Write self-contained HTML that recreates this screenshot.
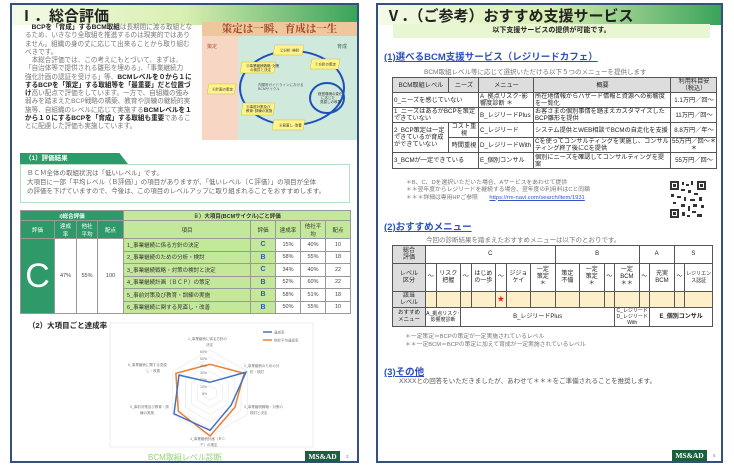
<!DOCTYPE html>
<html><head><meta charset="utf-8"><style>
*{margin:0;padding:0;box-sizing:border-box}
body{width:734px;height:466px;background:#fff;position:relative;overflow:hidden;font-family:"Liberation Sans","Noto Sans CJK JP",sans-serif;color:#444}
.a{position:absolute;white-space:nowrap}
.frame{position:absolute;border:2px solid #34507e;background:#fff}
.hdr{position:absolute;height:20px;background:linear-gradient(90deg,#f4fae8 0%,#d9efb0 50%,#3aa35a 100%)}
.ttl{font-weight:bold;color:#222;font-size:15px}
.p{font-size:6.6px;line-height:8.25px;color:#777}
.p b{color:#222}
table{border-collapse:collapse;table-layout:fixed;position:absolute}
td{border:1px solid #999;font-size:5.5px;text-align:center;overflow:hidden;white-space:nowrap;padding:0}
.g{background:#2e9a6a;color:#fff}
.lg{background:#c4e89a;color:#333}
.bl{color:#3456c0}
.t2 td{border-color:#555;font-size:6.2px;text-align:left;padding-left:1px;line-height:7px;white-space:normal;color:#222}
.t3 td{border-color:#555;font-size:6px;line-height:7px;white-space:normal;color:#222}
.h{color:#2d4fc0;font-weight:bold;font-size:9.5px;text-decoration:underline}
.logo{position:absolute;background:#1e5e3e;color:#fff;font-family:"Liberation Serif",serif;font-weight:bold;font-size:7.5px;text-align:center;line-height:11px;height:11px;width:35px}
</style></head><body>

<div class="frame" style="left:10px;top:3px;width:349px;height:460px"></div>
<div class="hdr" style="left:12px;top:5px;width:345px"></div>
<div class="a ttl" style="left:19px;top:5px">Ⅰ．総合評価</div>

<div class="a p" style="left:25px;top:24px">
<div>　<b>BCPを「育成」するBCM取組</b>は長期間に渡る取組とな</div>
<div>るため、いきなり全取組を推進するのは現実的ではあり</div>
<div>ません。組織の身の丈に応じて出来ることから取り組む</div>
<div>べきです。</div>
<div>　本総合評価では、この考えにもとづいて、まずは、</div>
<div>「自治体等で提供される雛形を埋める」、「事業継続力</div>
<div>強化計画の認証を受ける」等、<b>BCMレベルを０から１に</b></div>
<div><b>するBCPを「策定」する取組等を「最重要」だと位置づ</b></div>
<div><b>け</b>高い配点で評価をしています。一方で、自組織の強み</div>
<div>弱みを踏まえたBCP戦略の構築、教育や訓練の継続的実</div>
<div>施等、自組織のレベルに応じて実施する<b>BCMレベルを１</b></div>
<div><b>から１０にするBCPを「育成」する取組も重要</b>であるこ</div>
<div>とに配慮した評価も実施しています。</div>
</div>

<div class="a" style="left:202px;top:22px;width:155px;height:118px;background:#cfe9dc"></div>
<div class="a" style="left:202px;top:36px;width:36px;height:104px;background:#f7d6c4"></div>
<div class="a" style="left:202px;top:22px;width:155px;height:14px;background:#efc79c;color:#a2452a;font-family:'Noto Serif CJK SC',serif;font-weight:bold;font-size:10.5px;text-align:center;line-height:14px">策定は一瞬、育成は一生</div>
<div class="a" style="left:207px;top:43px;font-size:5px;color:#b06040">策定</div>
<div class="a" style="left:337px;top:43px;font-size:5px;color:#3a6a5a">育成</div>
<svg class="a" style="left:0;top:0" width="734" height="466">
<ellipse cx="292" cy="88" rx="52" ry="37" fill="none" stroke="#1f4fb8" stroke-width="2"/>
<ellipse cx="327" cy="98" rx="17" ry="15" fill="none" stroke="#1f4fb8" stroke-width="2"/>
<g fill="#fff48a" stroke="#c8b040" stroke-width=".4">
<polygon points="275,45 304,45 302,55 273,55"/>
<polygon points="312,59 340,59 338,69 310,69"/>
<polygon points="242,62 276,62 274,73 240,73"/>
<polygon points="209,84 236,84 234,94 207,94"/>
<polygon points="243,103 275,103 273,115 241,115"/>
<polygon points="274,120 305,120 303,130 272,130"/>
</g>
<g font-size="3.5" fill="#333" font-family="Liberation Sans,Noto Sans CJK JP,sans-serif">
<text x="280" y="51.5">②分析･検討</text><text x="315" y="65.5">①方針の策定</text>
<text x="246" y="67">③事業継続戦略･対策</text><text x="250" y="71">の検討と決定</text>
<text x="212" y="90.5">④計画の策定</text><text x="246" y="108">⑤事前対策及び</text><text x="246" y="112">教育･訓練の実施</text>
<text x="279" y="126.5">⑥見直し･改善</text>
<text x="258" y="86" fill="#556">内閣府ガイドラインにおける</text><text x="258" y="90" fill="#556">BCMサイクル</text>
<text x="318" y="95">経営環境の変化</text><text x="321" y="99">に応じた</text><text x="320" y="103">見直しの改善</text>
</g>

<rect x="110" y="323" width="203" height="124" fill="#fff" stroke="#e4e4e4" stroke-width=".7"/>
<g fill="none" stroke="#e0e0e0" stroke-width=".5">
<polygon points="210,350 247.2,371.5 247.2,414.5 210,436 172.8,414.5 172.8,371.5"/>
<polygon points="210,357.2 241,375.1 241,410.9 210,428.8 179,410.9 179,375.1"/>
<polygon points="210,364.3 234.8,378.7 234.8,407.3 210,421.7 185.2,407.3 185.2,378.7"/>
<polygon points="210,371.5 228.6,382.3 228.6,403.8 210,414.5 191.4,403.8 191.4,382.3"/>
<polygon points="210,378.7 222.4,385.8 222.4,400.2 210,407.3 197.6,400.2 197.6,385.8"/>
<polygon points="210,385.8 216.2,389.4 216.2,396.6 210,400.2 203.8,396.6 203.8,389.4"/>
</g>
<polygon points="210,364.3 244.1,373.3 234.9,407.3 210,436 178.3,411.3 175.9,373.3" fill="none" stroke="#ed7d31" stroke-width="1.5"/>
<polygon points="210,382.2 246,372.2 231.1,405.2 210,430.3 174,413.8 179,375.1" fill="none" stroke="#4472c4" stroke-width="1.5"/>
<line x1="263" y1="332" x2="272" y2="332" stroke="#4472c4" stroke-width="1.5"/>
<line x1="263" y1="340" x2="272" y2="340" stroke="#ed7d31" stroke-width="1.5"/>
<g font-size="3.5" fill="#777" font-family="Liberation Sans,Noto Sans CJK JP,sans-serif">
<text x="274" y="333.5">達成率</text><text x="274" y="341.5">他社平均達成率</text>
<text x="188" y="340">1_事業継続に係る方針の</text><text x="206" y="346">決定</text>
<text x="244" y="367">2_事業継続のための分</text><text x="250" y="373">析・検討</text>
<text x="244" y="408">3_事業継続戦略・対策の</text><text x="250" y="414">検討と決定</text>
<text x="190" y="440">4_事業継続計画（ＢＣ</text><text x="200" y="446">Ｐ）の策定</text>
<text x="130" y="408">5_事前対策及び教育・訓</text><text x="140" y="414">練の実施</text>
<text x="128" y="366">6_事業継続に関する見直</text><text x="146" y="372">し・改善</text>
<text x="200" y="353">60%</text><text x="200" y="360">50%</text><text x="200" y="367">40%</text><text x="200" y="374">30%</text><text x="200" y="381">20%</text><text x="200" y="388">10%</text><text x="202" y="395">0%</text>
</g>

<g fill="#333">
<rect x="670" y="181" width="36" height="37" fill="#fff"/>
<rect x="670" y="181" width="9" height="9"/><rect x="672" y="183" width="5" height="5" fill="#fff"/><rect x="673" y="184" width="3" height="3"/>
<rect x="697" y="181" width="9" height="9"/><rect x="699" y="183" width="5" height="5" fill="#fff"/><rect x="700" y="184" width="3" height="3"/>
<rect x="670" y="209" width="9" height="9"/><rect x="672" y="211" width="5" height="5" fill="#fff"/><rect x="673" y="212" width="3" height="3"/>
<rect x="682" y="182" width="2" height="3"/><rect x="686" y="184" width="3" height="2"/><rect x="691" y="181" width="2" height="4"/><rect x="681" y="189" width="4" height="2"/>
<rect x="688" y="190" width="3" height="3"/><rect x="694" y="193" width="4" height="2"/><rect x="671" y="194" width="3" height="3"/><rect x="677" y="196" width="4" height="2"/>
<rect x="684" y="197" width="2" height="4"/><rect x="690" y="199" width="5" height="2"/><rect x="699" y="197" width="3" height="4"/><rect x="673" y="202" width="3" height="2"/>
<rect x="681" y="204" width="4" height="3"/><rect x="688" y="206" width="2" height="5"/><rect x="693" y="204" width="4" height="3"/><rect x="701" y="205" width="3" height="3"/>
<rect x="682" y="212" width="3" height="4"/><rect x="692" y="211" width="4" height="2"/><rect x="697" y="214" width="5" height="3"/><rect x="687" y="215" width="3" height="2"/>
</g>
</svg>

<div class="a" style="left:20px;top:153px;width:108px;height:11px;background:#2e9a6a;clip-path:polygon(0 0,92% 0,100% 100%,0 100%);color:#fff;font-size:6.5px;font-weight:bold;line-height:11px;padding-left:5px">（1）評価結果</div>
<div class="a" style="left:20px;top:164px;width:330px;height:39px;border:1px solid #b8e0c0;font-size:6.5px;line-height:9px;padding:4px 0 0 6px;color:#666">
<div>ＢＣＭ全体の取組状況は「低いレベル」です。</div>
<div>大項目に一部「平均レベル（Ｂ評価）」の項目がありますが、「低いレベル（Ｃ評価）」の項目が全体</div>
<div>の評価を下げていますので、今後は、この項目のレベルアップに取り組まれることをおすすめします。</div>
</div>

<table style="left:20px;top:210px;width:330px">
<colgroup><col style="width:34px"><col style="width:22px"><col style="width:21px"><col style="width:26px"><col style="width:127px"><col style="width:25px"><col style="width:25px"><col style="width:25px"><col style="width:25px"></colgroup>
<tr style="height:10px"><td class="g" colspan="4" style="font-weight:bold">i)総合評価</td><td class="lg" colspan="5" style="font-weight:bold">ⅱ）大項目(BCMサイクル)ごと評価</td></tr>
<tr style="height:18px"><td class="g">評価</td><td class="g">達成<br>率</td><td class="g">他社<br>平均</td><td class="g">配点</td><td class="lg">項目</td><td class="lg">評価</td><td class="lg">達成率</td><td class="lg">他社平<br>均</td><td class="lg">配点</td></tr>
<tr style="height:12.5px"><td class="g" rowspan="6" style="font-size:34px">C</td><td rowspan="6">47%</td><td rowspan="6">55%</td><td rowspan="6">100</td><td class="lg" style="text-align:left;padding-left:3px">1_事業継続に係る方針の決定</td><td class="lg bl" style="font-size:7px;font-weight:bold">C</td><td>15%</td><td>40%</td><td>10</td></tr>
<tr style="height:12.5px"><td class="lg" style="text-align:left;padding-left:3px">2_事業継続のための分析・検討</td><td class="lg bl" style="font-size:7px;font-weight:bold">B</td><td>58%</td><td>55%</td><td>18</td></tr>
<tr style="height:12.5px"><td class="lg" style="text-align:left;padding-left:3px">3_事業継続戦略・対策の検討と決定</td><td class="lg bl" style="font-size:7px;font-weight:bold">C</td><td>34%</td><td>40%</td><td>22</td></tr>
<tr style="height:12.5px"><td class="lg" style="text-align:left;padding-left:3px">4_事業継続計画（ＢＣＰ）の策定</td><td class="lg bl" style="font-size:7px;font-weight:bold">B</td><td>52%</td><td>60%</td><td>22</td></tr>
<tr style="height:12.5px"><td class="lg" style="text-align:left;padding-left:3px">5_事前対策及び教育・訓練の実施</td><td class="lg bl" style="font-size:7px;font-weight:bold">B</td><td>58%</td><td>51%</td><td>18</td></tr>
<tr style="height:12.5px"><td class="lg" style="text-align:left;padding-left:3px">6_事業継続に関する見直し・改善</td><td class="lg bl" style="font-size:7px;font-weight:bold">B</td><td>50%</td><td>55%</td><td>10</td></tr>
</table>

<div class="a" style="left:28px;top:320px;font-size:7.5px;font-weight:bold;color:#222">（2）大項目ごと達成率</div>
<div class="a" style="left:148px;top:452px;font-size:8px;color:#8cd66a">BCM取組レベル診断</div>
<div class="logo" style="left:305px;top:451px">MS&amp;AD</div>
<div class="a" style="left:346px;top:454px;font-size:4.5px;color:#888">3</div>

<div class="frame" style="left:376px;top:3px;width:347px;height:460px;z-index:-1"></div>
<div class="hdr" style="left:378px;top:5px;width:343px"></div>
<div class="a ttl" style="left:386px;top:5px">Ⅴ．（ご参考）おすすめ支援サービス</div>
<div class="a" style="left:393px;top:24px;width:317px;height:14px;background:#e9f6d2;text-align:center;font-size:7px;font-weight:bold;line-height:14px;color:#222">以下支援サービスの提供が可能です。</div>
<div class="a h" style="left:384px;top:49px">(1)選べるBCM支援サービス（レジリードカフェ）</div>
<div class="a" style="left:424px;top:66px;font-size:6.5px;color:#777">BCM取組レベル等に応じて選択いただける以下５つのメニューを提供します</div>

<table class="t2" style="left:392px;top:77px;width:324px">
<colgroup><col style="width:56px"><col style="width:30px"><col style="width:55px"><col style="width:137px"><col style="width:46px"></colgroup>
<tr style="height:15px"><td style="background:#ddd;text-align:center">BCM取組レベル</td><td style="background:#ddd;text-align:center">ニーズ</td><td style="background:#ddd;text-align:center">メニュー</td><td style="background:#ddd;text-align:center">概要</td><td style="background:#ddd;text-align:center">利用料目安<br>（税込）</td></tr>
<tr style="height:15px"><td colspan="2">0_ニーズを感じていない</td><td class="bl">A_拠点リスク･影響度診断 ＊</td><td>所在地情報からハザード情報と資源への影響度を一覧化</td><td style="text-align:center">1.1万円／回～</td></tr>
<tr style="height:15px"><td colspan="2">1_ニーズはあるがBCPを策定できていない</td><td class="bl">B_レジリードPlus</td><td>お客さまの個別事情を踏まえカスタマイズしたBCP雛形を提供</td><td style="text-align:center">11万円／回～</td></tr>
<tr style="height:15px"><td rowspan="2">2_BCP策定は一定できているが育成ができていない</td><td style="text-align:center">コスト重視</td><td class="bl">C_レジリード</td><td>システム提供とWEB相談でBCMの自走化を支援</td><td style="text-align:center">8.8万円／年～</td></tr>
<tr style="height:15px"><td style="text-align:center">時間重視</td><td class="bl">D_レジリードWith</td><td>Cを使ってコンサルティングを実施し、コンサルティング終了後にCを提供</td><td style="text-align:center">55万円／回～＊＊</td></tr>
<tr style="height:16px"><td colspan="2">3_BCMが一定できている</td><td class="bl">E_個別コンサル</td><td>個別にニーズを確認してコンサルティングを提案</td><td style="text-align:center">55万円／回～</td></tr>
</table>
<div class="a" style="left:406px;top:180px;font-size:5.8px;line-height:7.3px;color:#777">
<div>＊B、C、Dを選択いただいた場合、Aサービスをあわせて提供</div>
<div>＊＊翌年度からレジリードを継続する場合、翌年度の利用料はCと同額</div>
<div>＊＊＊詳細は専用HPご参照　　<span style="color:#3456c0;text-decoration:underline">https://rm-navi.com/search/item/1931</span></div>
</div>

<div class="a h" style="left:384px;top:219px">(2)おすすめメニュー</div>
<div class="a" style="left:426px;top:234px;font-size:6.5px;color:#777">今回の診断結果を踏まえたおすすめメニューは以下のとおりです。</div>
<table class="t3" style="left:392px;top:245px;width:321px">
<colgroup><col style="width:31px"><col style="width:10px"><col style="width:23px"><col style="width:10px"><col style="width:23px"><col style="width:10px"><col style="width:23px"><col style="width:23px"><col style="width:23px"><col style="width:23px"><col style="width:10px"><col style="width:23px"><col style="width:10px"><col style="width:23px"><col style="width:10px"><col style="width:26px"></colgroup>
<tr style="height:18px"><td style="background:#ddd">総合<br>評価</td><td colspan="7">C</td><td colspan="4">B</td><td colspan="2">A</td><td colspan="2">S</td></tr>
<tr style="height:28px"><td style="background:#ddd">レベル<br>区分</td><td>～</td><td>リスク<br>把握</td><td>～</td><td>はじめ<br>の一歩</td><td>～</td><td>ジジョ<br>ケイ</td><td>一定<br>策定<br>＊</td><td>策定<br>不備</td><td>一定<br>策定<br>＊</td><td>～</td><td>一定<br>BCM<br>＊＊</td><td>～</td><td>充実<br>BCM</td><td>～</td><td style="font-size:5px">レジリエンス認証</td></tr>
<tr style="height:16px;background:#fdf0c8"><td style="background:#ddd">該当<br>レベル</td><td></td><td></td><td></td><td></td><td style="color:#e02020;font-size:7px">★</td><td></td><td></td><td></td><td></td><td></td><td></td><td></td><td></td><td></td><td></td></tr>
<tr style="height:19px"><td style="background:#ddd;font-size:5.5px">おすすめ<br>メニュー</td><td colspan="2" class="bl" style="font-size:5px;line-height:6px">A_拠点リスク･影響度診断</td><td colspan="8" class="bl">B_レジリードPlus</td><td colspan="2" class="bl" style="font-size:5px;line-height:6px">C_レジリード<br>D_レジリードWith</td><td colspan="3" class="bl" style="font-weight:bold">E_個別コンサル</td></tr>
</table>
<div class="a" style="left:405px;top:334px;font-size:5.8px;line-height:7.5px;color:#777">
<div>＊一定策定＝BCPの策定が一定実施されているレベル</div>
<div>＊＊一定BCM＝BCPの策定に加えて育成が一定実施されているレベル</div>
</div>
<div class="a h" style="left:384px;top:364px">(3)その他</div>
<div class="a" style="left:399px;top:375px;font-size:6.5px;color:#555">XXXXとの回答をいただきましたが、あわせて＊＊＊をご準備されることを推奨します。</div>
<div class="logo" style="left:672px;top:450px">MS&amp;AD</div>
<div class="a" style="left:713px;top:453px;font-size:4.5px;color:#888">5</div>
</body></html>
